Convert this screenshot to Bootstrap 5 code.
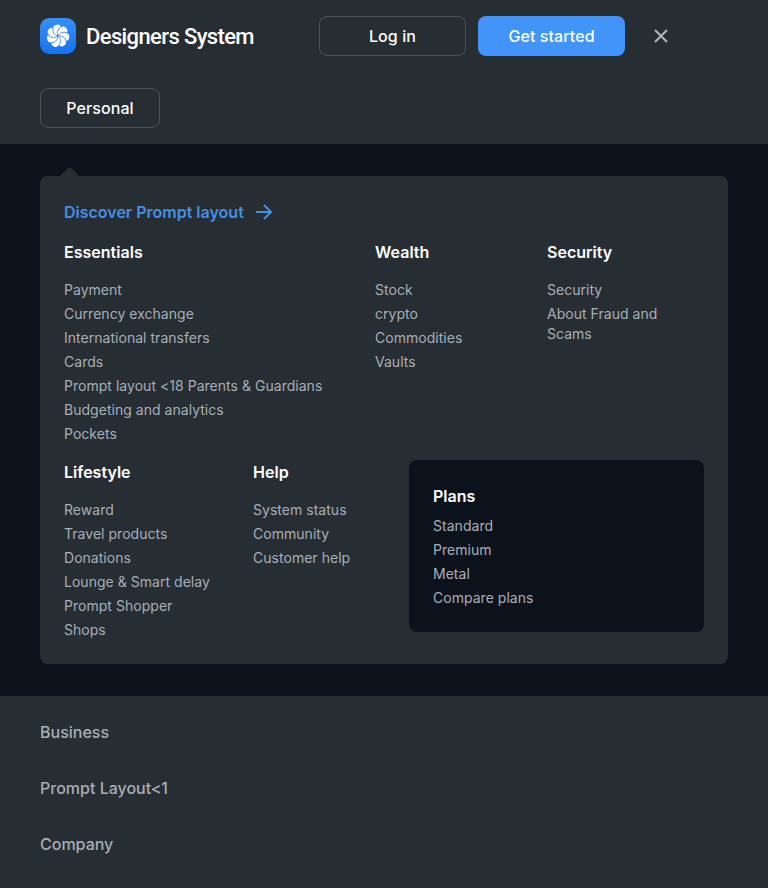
<!DOCTYPE html>
<html lang="en">
<head>
<meta charset="utf-8">
<meta name="viewport" content="width=device-width, initial-scale=1">
<title>Designers System</title>
<link href="https://cdn.jsdelivr.net/npm/bootstrap@5.3.0/dist/css/bootstrap.min.css" rel="stylesheet">
<style>
  :root { --surface: #262d33; --deep: #0c121b; --muted: #a8afb7; --accent: #4294f9; }
  body { font-family: Inter, "Liberation Sans", sans-serif; background: var(--surface); color: #fff; line-height: 24px; }
  .brand-name { font: 500 22px/36px Roboto, sans-serif; letter-spacing: -.62px; margin-left: 10px; padding-top: 1px; }
  .top-bar { height: 72px; padding: 0 71px 0 40px; }
  .top-actions { gap: 12px; }
  .top-btn { width: 147px; height: 40px; padding: 7px 0; font-weight: 500; line-height: 24px; border-radius: 8px; letter-spacing: .08px; }
  .btn-line { color: #fff; border: 1px solid #4b535a; }
  .btn-accent { color: #fff; background: var(--accent); }
  .close-btn { width: 72px; }
  .tab-row { padding: 16px 40px; }
  .tab-btn { width: 120px; }
  .mega-area { background: var(--deep); padding: 32px 40px; }
  .mega-panel { background: var(--surface); border-radius: 8px; padding: 24px; }
  .mega-panel::before { content: ""; position: absolute; left: 20px; top: -9px; width: 19px; height: 9px; background: var(--surface); clip-path: polygon(0 100%, 42% 12%, 50% 5%, 58% 12%, 100% 100%); }
  .discover { color: #4490e6; font-weight: 600; gap: 11px; }
  .menu-title { font-size: 16px; line-height: 24px; font-weight: 600; letter-spacing: .02px; margin: 0 0 16px; }
  .menu-list { font-size: 14px; line-height: 20px; letter-spacing: .03px; }
  .menu-list a { color: var(--muted); }
  .grid-upper { display: grid; grid-template-columns: 311px 172px 140px; }
  .grid-lower { display: grid; grid-template-columns: 189px 156px 295px; align-items: start; }
  .plans { background: var(--deep); border-radius: 8px; padding: 24px; }
  .plans .menu-title { margin-bottom: 8px; }
  .bottom-nav { padding: 24px 40px; gap: 32px; font-weight: 500; letter-spacing: 0; }
  .bottom-nav a { color: var(--muted); }
</style>
<script src="https://cdn.jsdelivr.net/npm/bootstrap@5.3.0/dist/js/bootstrap.bundle.min.js"></script>
</head>
<body>
<header>
  <div class="top-bar d-flex align-items-center">
    <a href="#" class="d-flex align-items-center text-white text-decoration-none me-auto">
      <svg width="36" height="36" viewBox="0 0 36 36" aria-hidden="true">
        <defs>
          <linearGradient id="tile" x1="0" y1="0" x2="0" y2="1"><stop offset="0" stop-color="#3590f8"/><stop offset="1" stop-color="#1872ee"/></linearGradient>
          <circle id="lobe" cx="0" cy="-7.4" r="4"/>
          <path id="seam" d="M0 0Q-4.2-4.4 0-9.8"/>
        </defs>
        <rect width="36" height="36" rx="9.5" fill="url(#tile)"/>
        <g transform="translate(18 18) rotate(-6)">
          <g fill="#fff">
            <circle r="7.5"/>
            <use href="#lobe"/><use href="#lobe" transform="rotate(51.43)"/><use href="#lobe" transform="rotate(102.86)"/><use href="#lobe" transform="rotate(154.29)"/><use href="#lobe" transform="rotate(205.71)"/><use href="#lobe" transform="rotate(257.14)"/><use href="#lobe" transform="rotate(308.57)"/>
          </g>
          <g fill="none" stroke="#2c80ef" stroke-width=".75" transform="rotate(25.71)">
            <use href="#seam"/><use href="#seam" transform="rotate(51.43)"/><use href="#seam" transform="rotate(102.86)"/><use href="#seam" transform="rotate(154.29)"/><use href="#seam" transform="rotate(205.71)"/><use href="#seam" transform="rotate(257.14)"/><use href="#seam" transform="rotate(308.57)"/>
          </g>
        </g>
      </svg>
      <span class="brand-name">Designers System</span>
    </a>
    <div class="top-actions d-flex">
      <a href="#" class="btn btn-line top-btn">Log in</a>
      <a href="#" class="btn btn-accent top-btn">Get started</a>
    </div>
    <button type="button" class="btn close-btn p-0 d-flex justify-content-center" aria-label="Close">
      <svg width="14" height="14" viewBox="0 0 14 14" fill="none" stroke="#b1b6bd" stroke-width="2"><path d="M1 1l12 12M13 1L1 13"/></svg>
    </button>
  </div>
  <div class="tab-row"><a href="#" class="btn btn-line top-btn tab-btn">Personal</a></div>
</header>
<main class="mega-area">
  <section class="mega-panel position-relative">
    <a href="#" class="discover d-flex align-items-center text-decoration-none mb-3">Discover Prompt layout
      <svg width="18" height="18" viewBox="0 0 18 18" fill="none" stroke="currentColor" stroke-width="2"><path d="M1 9h15M9 2l7 7-7 7"/></svg>
    </a>
    <div class="grid-upper mb-3">
      <div><h2 class="menu-title">Essentials</h2>
        <nav class="menu-list d-flex flex-column gap-1">
          <a class="text-decoration-none" href="#">Payment</a><a class="text-decoration-none" href="#">Currency exchange</a><a class="text-decoration-none" href="#">International transfers</a><a class="text-decoration-none" href="#">Cards</a><a class="text-decoration-none" href="#">Prompt layout &lt;18 Parents &amp; Guardians</a><a class="text-decoration-none" href="#">Budgeting and analytics</a><a class="text-decoration-none" href="#">Pockets</a>
        </nav></div>
      <div><h2 class="menu-title">Wealth</h2>
        <nav class="menu-list d-flex flex-column gap-1">
          <a class="text-decoration-none" href="#">Stock</a><a class="text-decoration-none" href="#">crypto</a><a class="text-decoration-none" href="#">Commodities</a><a class="text-decoration-none" href="#">Vaults</a>
        </nav></div>
      <div><h2 class="menu-title">Security</h2>
        <nav class="menu-list d-flex flex-column gap-1">
          <a class="text-decoration-none" href="#">Security</a><a class="text-decoration-none" href="#">About Fraud and Scams</a>
        </nav></div>
    </div>
    <div class="grid-lower">
      <div><h2 class="menu-title">Lifestyle</h2>
        <nav class="menu-list d-flex flex-column gap-1">
          <a class="text-decoration-none" href="#">Reward</a><a class="text-decoration-none" href="#">Travel products</a><a class="text-decoration-none" href="#">Donations</a><a class="text-decoration-none" href="#">Lounge &amp; Smart delay</a><a class="text-decoration-none" href="#">Prompt Shopper</a><a class="text-decoration-none" href="#">Shops</a>
        </nav></div>
      <div><h2 class="menu-title">Help</h2>
        <nav class="menu-list d-flex flex-column gap-1">
          <a class="text-decoration-none" href="#">System status</a><a class="text-decoration-none" href="#">Community</a><a class="text-decoration-none" href="#">Customer help</a>
        </nav></div>
      <div class="plans"><h2 class="menu-title">Plans</h2>
        <nav class="menu-list d-flex flex-column gap-1">
          <a class="text-decoration-none" href="#">Standard</a><a class="text-decoration-none" href="#">Premium</a><a class="text-decoration-none" href="#">Metal</a><a class="text-decoration-none" href="#">Compare plans</a>
        </nav></div>
    </div>
  </section>
</main>
<nav class="bottom-nav d-flex flex-column">
  <a class="text-decoration-none" href="#">Business</a><a class="text-decoration-none" href="#">Prompt Layout&lt;1</a><a class="text-decoration-none" href="#">Company</a>
</nav>
</body>
</html>
